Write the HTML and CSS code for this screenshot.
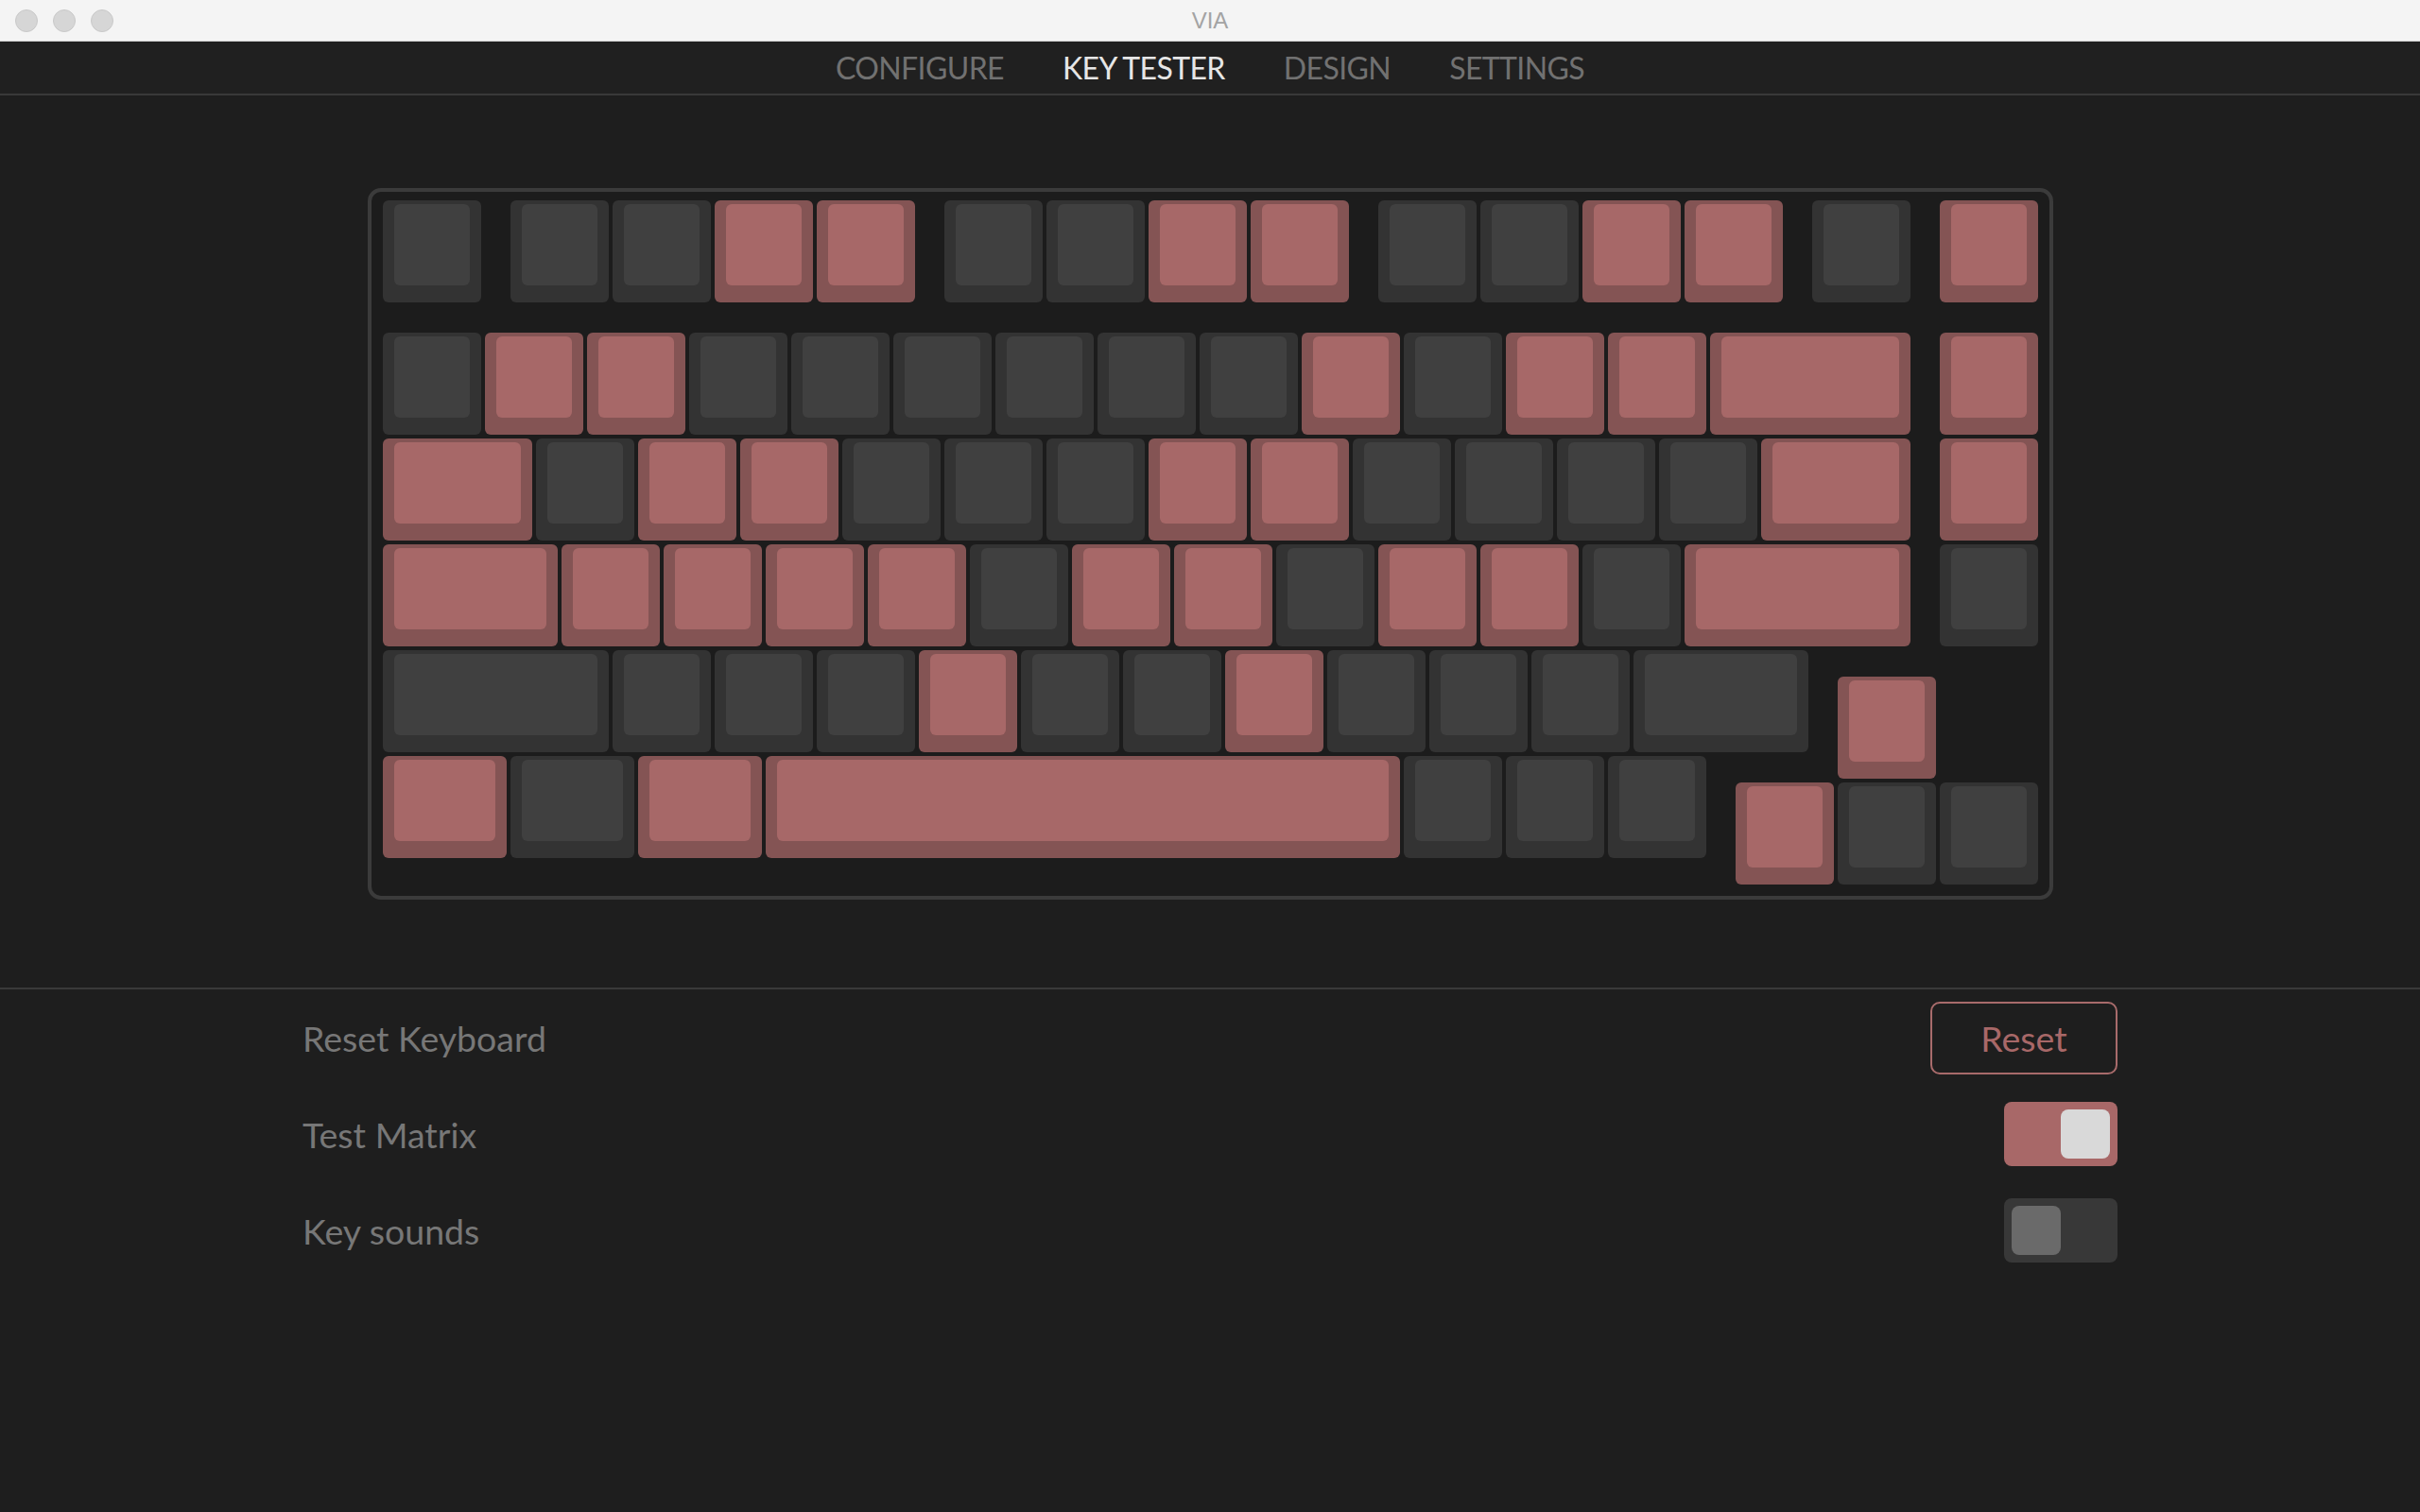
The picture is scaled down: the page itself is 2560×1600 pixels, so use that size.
FILE: index.html
```html
<!DOCTYPE html>
<html lang="en">
<head>
    <meta charset="UTF-8">
    <meta name="viewport" content="width=device-width, initial-scale=1.0">
    <title>VIA</title>
    <link rel="stylesheet" href="styles.css">
    <script src="script.js" defer></script>
</head>
<body>
    <div class="titlebar">
        <div class="lights">
            <span class="light"></span>
            <span class="light"></span>
            <span class="light"></span>
        </div>
        <div class="window-title">VIA</div>
        <div></div>
    </div>
    <div class="menu">
        <span class="menu-item">CONFIGURE</span>
        <span class="menu-item active">KEY TESTER</span>
        <span class="menu-item">DESIGN</span>
        <span class="menu-item">SETTINGS</span>
    </div>
    <div class="board-area">
        <div class="board">
            <div id="keys" class="keys"></div>
        </div>
    </div>
    <div class="settings">
        <div class="row">
            <span class="label">Reset Keyboard</span>
            <button class="reset-btn">Reset</button>
        </div>
        <div class="row">
            <span class="label">Test Matrix</span>
            <div class="toggle on"><div class="knob"></div></div>
        </div>
        <div class="row">
            <span class="label">Key sounds</span>
            <div class="toggle"><div class="knob"></div></div>
        </div>
    </div>
</body>
</html>
```

FILE: styles.css
```css
body {
    margin: 0;
    background-color: #1e1e1e;
    font-family: Lato, "Liberation Sans", sans-serif;
}
.titlebar {
    display: grid;
    grid-template-columns: 1fr auto 1fr;
    align-items: center;
    height: 43px;
    background-color: #f4f4f4;
    border-bottom: 1px solid #d0d0d0;
}
.lights {
    display: flex;
    gap: 16px;
    padding-left: 16px;
}
.light {
    width: 22px;
    height: 22px;
    border-radius: 50%;
    background-color: #d6d6d6;
    border: 1px solid #c9c9c9;
}
.window-title {
    font-family: "Liberation Sans", sans-serif;
    font-size: 24px;
    color: #a3a3a3;
}
.menu {
    display: flex;
    justify-content: center;
    align-items: center;
    gap: 62px;
    height: 55px;
    background-color: #202020;
    border-bottom: 2px solid #393939;
}
.menu-item {
    font-size: 32px;
    letter-spacing: -0.6px;
    color: #717171;
}
.menu-item.active {
    color: #e6e6e6;
}
.board-area {
    display: flex;
    justify-content: center;
    align-items: center;
    height: 939px;
    padding-top: 5px;
    border-bottom: 2px solid #393939;
}
.board {
    border: 4px solid #3b3b3b;
    border-radius: 14px;
    padding: 9px 8px 8px 12px;
    background-color: #1c1c1c;
}
.keys {
    display: grid;
    grid-template-columns: repeat(65, 27px);
    grid-template-rows: repeat(26, 28px);
}
.key {
    display: flex;
    margin: 0 4px 4px 0;
    border-radius: 6px;
    background-color: #333333;
}
.cap {
    flex: 1;
    margin: 4px 12px 18px 12px;
    border-radius: 6px;
    background-color: #404040;
}
.key.pressed {
    background-color: #845454;
}
.key.pressed .cap {
    background-color: #a76868;
}
.settings {
    width: 1920px;
    margin: 0 auto;
}
.row {
    display: flex;
    justify-content: space-between;
    align-items: center;
    height: 102px;
}
.label {
    font-size: 37.5px;
    color: #777777;
}
.reset-btn {
    width: 198px;
    height: 77px;
    background: transparent;
    border: 2px solid #a86b6b;
    border-radius: 10px;
    color: #a86868;
    font-family: Lato, "Liberation Sans", sans-serif;
    font-size: 37.5px;
    padding: 0;
}
.toggle {
    display: flex;
    width: 120px;
    height: 68px;
    box-sizing: border-box;
    padding: 8px;
    border-radius: 8px;
    background-color: #383838;
}
.toggle .knob {
    width: 52px;
    height: 52px;
    border-radius: 8px;
    background-color: #6a6a6a;
}
.toggle.on {
    justify-content: flex-end;
    background-color: #a86868;
}
.toggle.on .knob {
    background-color: #d9d9d9;
}
```

FILE: script.js
```js
// rows of the layout: widths in units, "*" = key pressed, "v" = dropped a quarter unit, "_" = gap
var layout = [
    { y: 0, keys: '1 _.25 1 1 1* 1* _.25 1 1 1* 1* _.25 1 1 1* 1* _.25 1 _.25 1*' },
    { y: 1.25, keys: '1 1* 1* 1 1 1 1 1 1 1* 1 1* 1* 2* _.25 1*' },
    { y: 2.25, keys: '1.5* 1 1* 1* 1 1 1 1* 1* 1 1 1 1 1.5* _.25 1*' },
    { y: 3.25, keys: '1.75* 1* 1* 1* 1* 1 1* 1* 1 1* 1* 1 2.25* _.25 1' },
    { y: 4.25, keys: '2.25 1 1 1 1* 1 1 1* 1 1 1 1.75 _.25 1*v' },
    { y: 5.25, keys: '1.25* 1.25 1.25* 6.25* 1 1 1 _.25 1*v 1v 1v' }
];

document.addEventListener('DOMContentLoaded', function() {
    var keys = document.getElementById('keys');

    layout.forEach(function(row) {
        var x = 0;
        row.keys.split(' ').forEach(function(token) {
            if (token[0] === '_') {
                x += parseFloat(token.slice(1));
                return;
            }
            var w = parseFloat(token);
            var y = row.y + (token.indexOf('v') > -1 ? 0.25 : 0);

            var key = document.createElement('div');
            key.className = token.indexOf('*') > -1 ? 'key pressed' : 'key';
            key.style.gridColumn = (Math.round(x * 4) + 1) + ' / span ' + Math.round(w * 4);
            key.style.gridRow = (Math.round(y * 4) + 1) + ' / span 4';

            var cap = document.createElement('div');
            cap.className = 'cap';
            key.appendChild(cap);
            keys.appendChild(key);

            x += w;
        });
    });
});
```
